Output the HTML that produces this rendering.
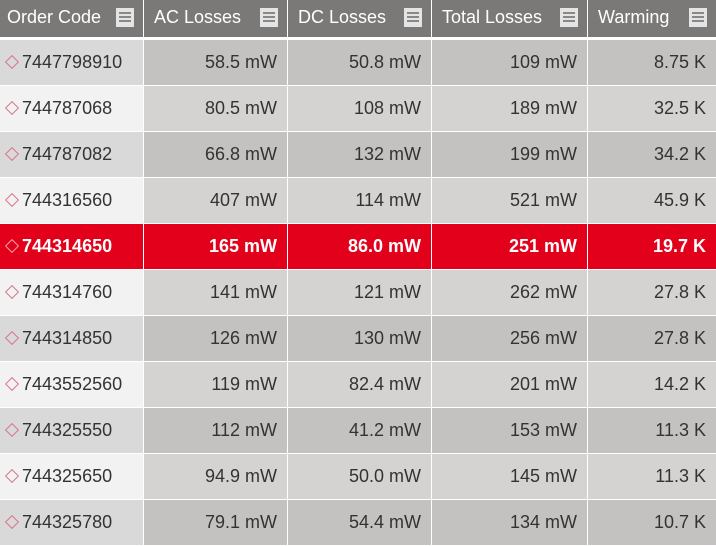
<!DOCTYPE html><html><head><style>
body{margin:0;width:716px;height:546px;overflow:hidden;background:#fff;font-family:"Liberation Sans",Arial,sans-serif;}
.r{position:absolute;left:0;width:716px;height:45px;}
.c{position:absolute;top:0;height:45px;line-height:45px;font-size:18px;color:#333;box-sizing:border-box;text-align:right;padding-right:10px;}
.h{position:absolute;top:0;height:37px;background:#7b7978;color:#fff;font-size:18px;line-height:34px;padding-left:7px;box-sizing:border-box;}
.ic{position:absolute;right:9px;top:8px;width:18px;height:19px;background:#e4e4e4;}
.ic i{position:absolute;left:3px;width:12px;height:2px;background:#888;}
.d{position:absolute;left:7px;top:17px;width:10px;height:10px;border:1.5px solid #d8768a;transform:rotate(45deg);box-sizing:border-box;}
.c1{left:0;width:143px;text-align:left;padding-left:22px;}
.c2{left:144px;width:143px}.c3{left:288px;width:143px}.c4{left:432px;width:155px}.c5{left:588px;width:128px}
.a .c1{background:#dad9d9}.a .cd{background:#c4c2c1}
.b .c1{background:#f2f2f2}.b .cd{background:#d5d3d2}
.s .c{background:#e2001a;color:#fff;font-weight:bold}
.s .d{border-color:#f4a0a8}
</style></head><body>
<div class="h" style="left:0;width:143px">Order Code<div class="ic"><i style="top:4px"></i><i style="top:8px"></i><i style="top:12px"></i></div></div>
<div class="h" style="left:144px;width:143px;padding-left:10px">AC Losses<div class="ic"><i style="top:4px"></i><i style="top:8px"></i><i style="top:12px"></i></div></div>
<div class="h" style="left:288px;width:143px;padding-left:10px">DC Losses<div class="ic"><i style="top:4px"></i><i style="top:8px"></i><i style="top:12px"></i></div></div>
<div class="h" style="left:432px;width:155px;padding-left:10px">Total Losses<div class="ic"><i style="top:4px"></i><i style="top:8px"></i><i style="top:12px"></i></div></div>
<div class="h" style="left:588px;width:128px;padding-left:10px">Warming<div class="ic"><i style="top:4px"></i><i style="top:8px"></i><i style="top:12px"></i></div></div>

<div class="r a" style="top:40px"><div class="c c1"><span class="d"></span>7447798910</div><div class="c cd c2">58.5 mW</div><div class="c cd c3">50.8 mW</div><div class="c cd c4">109 mW</div><div class="c cd c5">8.75 K</div></div>
<div class="r b" style="top:86px"><div class="c c1"><span class="d"></span>744787068</div><div class="c cd c2">80.5 mW</div><div class="c cd c3">108 mW</div><div class="c cd c4">189 mW</div><div class="c cd c5">32.5 K</div></div>
<div class="r a" style="top:132px"><div class="c c1"><span class="d"></span>744787082</div><div class="c cd c2">66.8 mW</div><div class="c cd c3">132 mW</div><div class="c cd c4">199 mW</div><div class="c cd c5">34.2 K</div></div>
<div class="r b" style="top:178px"><div class="c c1"><span class="d"></span>744316560</div><div class="c cd c2">407 mW</div><div class="c cd c3">114 mW</div><div class="c cd c4">521 mW</div><div class="c cd c5">45.9 K</div></div>
<div class="r s" style="top:224px"><div class="c c1"><span class="d"></span>744314650</div><div class="c cd c2">165 mW</div><div class="c cd c3">86.0 mW</div><div class="c cd c4">251 mW</div><div class="c cd c5">19.7 K</div></div>
<div class="r b" style="top:270px"><div class="c c1"><span class="d"></span>744314760</div><div class="c cd c2">141 mW</div><div class="c cd c3">121 mW</div><div class="c cd c4">262 mW</div><div class="c cd c5">27.8 K</div></div>
<div class="r a" style="top:316px"><div class="c c1"><span class="d"></span>744314850</div><div class="c cd c2">126 mW</div><div class="c cd c3">130 mW</div><div class="c cd c4">256 mW</div><div class="c cd c5">27.8 K</div></div>
<div class="r b" style="top:362px"><div class="c c1"><span class="d"></span>7443552560</div><div class="c cd c2">119 mW</div><div class="c cd c3">82.4 mW</div><div class="c cd c4">201 mW</div><div class="c cd c5">14.2 K</div></div>
<div class="r a" style="top:408px"><div class="c c1"><span class="d"></span>744325550</div><div class="c cd c2">112 mW</div><div class="c cd c3">41.2 mW</div><div class="c cd c4">153 mW</div><div class="c cd c5">11.3 K</div></div>
<div class="r b" style="top:454px"><div class="c c1"><span class="d"></span>744325650</div><div class="c cd c2">94.9 mW</div><div class="c cd c3">50.0 mW</div><div class="c cd c4">145 mW</div><div class="c cd c5">11.3 K</div></div>
<div class="r a" style="top:500px"><div class="c c1"><span class="d"></span>744325780</div><div class="c cd c2">79.1 mW</div><div class="c cd c3">54.4 mW</div><div class="c cd c4">134 mW</div><div class="c cd c5">10.7 K</div></div>
</body></html>
